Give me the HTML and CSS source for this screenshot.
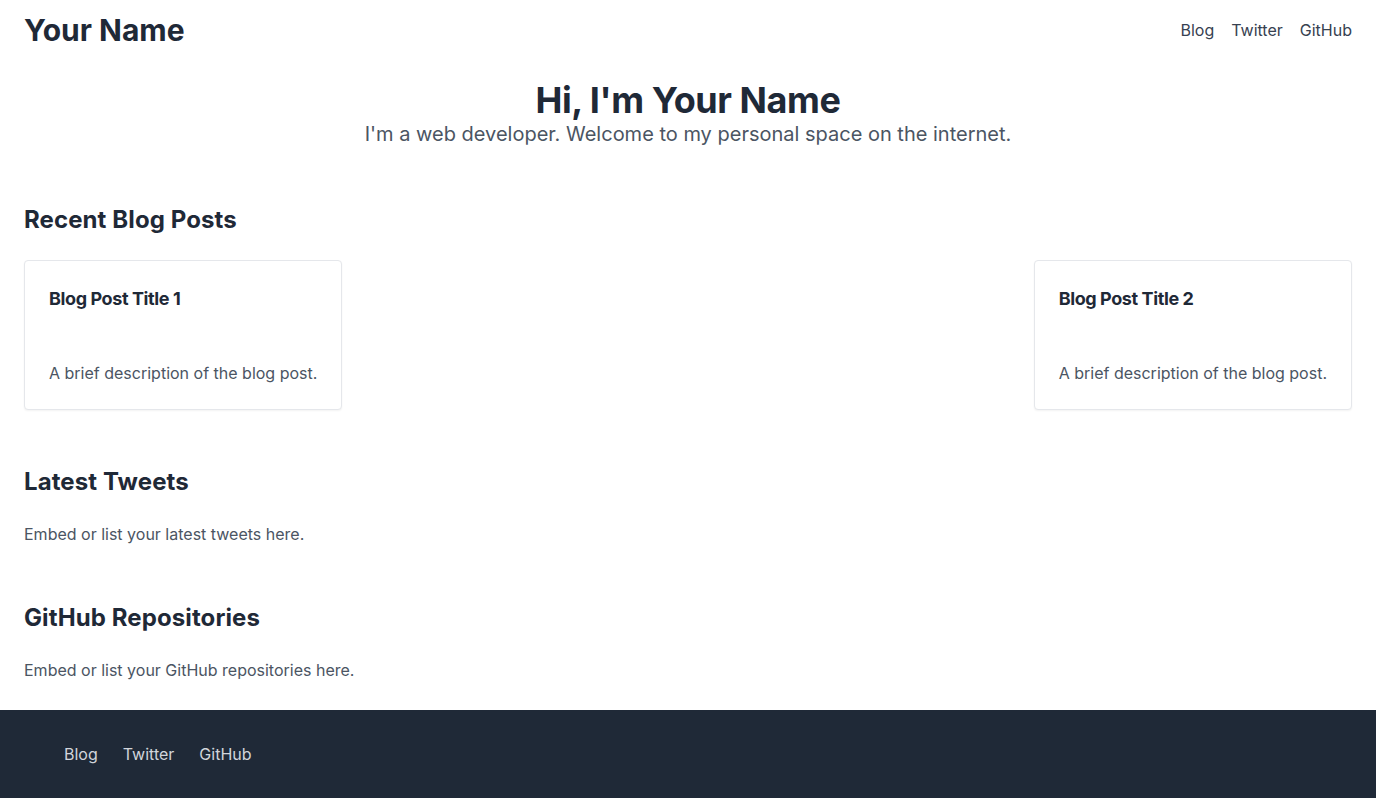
FILE: index.html
```html
<!DOCTYPE html>
<html lang="en">
<head>
<meta charset="utf-8">
<title>Your Name</title>
<link rel="stylesheet" href="styles.css">
</head>
<body>
<header class="site-header">
  <a class="brand" href="#">Your Name</a>
  <nav class="top-nav">
    <a href="#">Blog</a>
    <a href="#">Twitter</a>
    <a href="#">GitHub</a>
  </nav>
</header>
<main class="content">
  <section class="hero">
    <h1 class="hero-title">Hi, I'm Your Name</h1>
    <p class="hero-sub">I'm a web developer. Welcome to my personal space on the internet.</p>
  </section>
  <section class="block">
    <h2 class="block-title">Recent Blog Posts</h2>
    <div class="cards">
      <article class="card">
        <h3 class="card-title">Blog Post Title 1</h3>
        <p class="card-text">A brief description of the blog post.</p>
      </article>
      <article class="card">
        <h3 class="card-title">Blog Post Title 2</h3>
        <p class="card-text">A brief description of the blog post.</p>
      </article>
    </div>
  </section>
  <section class="block">
    <h2 class="block-title">Latest Tweets</h2>
    <p class="block-text">Embed or list your latest tweets here.</p>
  </section>
  <section class="block">
    <h2 class="block-title">GitHub Repositories</h2>
    <p class="block-text">Embed or list your GitHub repositories here.</p>
  </section>
</main>
<footer class="site-footer">
  <nav class="footer-nav">
    <a href="#">Blog</a>
    <a href="#">Twitter</a>
    <a href="#">GitHub</a>
  </nav>
</footer>
</body>
</html>
```
FILE: styles.css
```css
* { box-sizing: border-box; }
html, body { margin: 0; padding: 0; }
body {
  font-family: Inter, "Noto Sans", "Liberation Sans", sans-serif;
  color: #1f2937;
  background: #ffffff;
  font-size: 16px;
  line-height: 24px;
}
a { text-decoration: none; color: inherit; }

.site-header {
  display: flex;
  justify-content: space-between;
  align-items: center;
  padding: 12px 24px;
}
.brand {
  font-size: 30px;
  line-height: 36px;
  font-weight: 700;
  color: #1f2937;
}
.top-nav {
  display: flex;
  gap: 17px;
  color: #374151;
}

.content { padding: 0 24px; }

.hero {
  text-align: center;
  padding-top: 20px;
}
.hero-title {
  margin: 0;
  font-size: 36px;
  line-height: 40px;
  font-weight: 700;
  letter-spacing: -0.45px;
  color: #1f2937;
}
.hero-sub {
  margin: 0;
  font-size: 20px;
  line-height: 28px;
  color: #4b5563;
}

.block { margin-top: 56px; }
.block-title {
  margin: 0 0 24px;
  font-size: 24px;
  line-height: 32px;
  font-weight: 700;
  letter-spacing: 0.1px;
  color: #1f2937;
}
.block-text {
  margin: 0;
  color: #4b5563;
}

.cards {
  display: flex;
  justify-content: space-between;
}
.card {
  border: 1px solid #e5e7eb;
  border-radius: 4px;
  padding: 24px;
  box-shadow: 0 1px 2px rgba(0, 0, 0, 0.05);
  background: #fff;
}
.card-title {
  margin: 0 0 48px;
  font-size: 18px;
  line-height: 28px;
  font-weight: 700;
  letter-spacing: -0.4px;
  color: #1f2937;
}
.card-text {
  margin: 0;
  color: #4b5563;
}

.site-footer {
  margin-top: 28px;
  background: #1f2937;
  padding: 32px 64px 34px;
}
.footer-nav {
  display: flex;
  gap: 25px;
  color: #d1d5db;
}
```
